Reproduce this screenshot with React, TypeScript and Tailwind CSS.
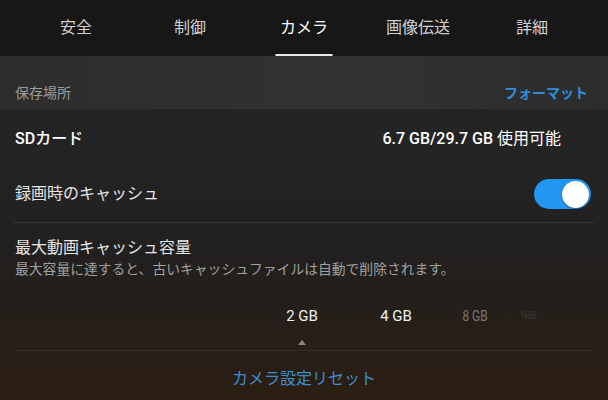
import React from "react";

const tabs = ["安全", "制御", "カメラ", "画像伝送", "詳細"];

export default function App() {
  return (
    <div
      className="w-[608px] h-[400px] overflow-hidden flex flex-col text-white"
      style={{ fontFamily: "Roboto, 'Noto Sans CJK JP', sans-serif" }}
    >
      {/* Tab bar */}
      <div className="h-[56px] bg-[#171717] flex px-[19px] shrink-0">
        {tabs.map((t) => {
          const active = t === "カメラ";
          return (
            <div key={t} className="flex-1 relative flex items-center justify-center">
              <span className={`text-[16px] ${active ? "text-white" : "text-[#d2d2d2]"}`}>{t}</span>
              {active && (
                <div className="absolute bottom-0 left-1/2 -translate-x-1/2 w-[57px] h-[2px] bg-[#e8e8e8]" />
              )}
            </div>
          );
        })}
      </div>

      <div className="flex-1 flex flex-col bg-[linear-gradient(180deg,#262626_0%,#232222_45%,#221f1d_65%,#2c1e12_100%)]">
        {/* Section header */}
        <div className="h-[53px] bg-[linear-gradient(90deg,#2e2d2d,#333232_60%,#2d2c2c)] flex items-end justify-between px-[15px] pb-[6px]">
          <span className="text-[14px] leading-[20px] text-[#9c9c9c]">保存場所</span>
          <span className="text-[14px] leading-[20px] font-bold text-[#2f8fdc] mr-[5px]">フォーマット</span>
        </div>

        {/* SD card */}
        <div className="h-[60px] flex items-center justify-between px-[15px]">
          <span className="text-[16px] font-medium">SDカード</span>
          <span className="text-[16px] mr-[32px]">
            <span className="font-medium">6.7 GB/29.7 GB</span> 使用可能
          </span>
        </div>

        {/* Cache toggle */}
        <div className="h-[53px] flex items-start justify-between px-[15px] pt-[10px]">
          <span className="text-[16px] leading-[30px] text-[#e6e6e6]">録画時のキャッシュ</span>
          <div className="w-[57px] h-[30px] rounded-full bg-[#2196f3] flex items-center justify-end pr-[2px] mr-[2px]">
            <div className="w-[27px] h-[27px] rounded-full bg-white shadow-[0_1px_2px_rgba(0,0,0,0.35)]" />
          </div>
        </div>

        <div className="mx-[14px] h-px bg-[#363535]" />

        {/* Max cache */}
        <div className="px-[15px] pt-[14px] flex flex-col">
          <span className="text-[16px] leading-[22px] text-[#e6e6e6]">最大動画キャッシュ容量</span>
          <span className="text-[13.8px] leading-[20px] text-[#a0a0a0]">
            最大容量に達すると、古いキャッシュファイルは自動で削除されます。
          </span>
        </div>

        {/* Picker */}
        <div className="flex pl-[255px] mt-[25px] h-[24px] items-center">
          <div className="w-[94px] text-center text-[15px] text-[#f0f0f0]">2 GB</div>
          <div className="w-[94px] text-center text-[15px] text-[#f0f0f0]">4 GB</div>
          <div className="w-[64px] text-center text-[14px] text-[#7a7672] scale-x-[0.85]">8 GB</div>
          <div className="w-[42px] text-center text-[11px] text-[#3f3a36] scale-x-[0.6]">16GB</div>
        </div>
        <div className="flex pl-[298px] mt-[12px]">
          <div className="w-0 h-0 border-l-[4px] border-r-[4px] border-b-[5px] border-l-transparent border-r-transparent border-b-[#8a8784]" />
        </div>

        <div className="mx-[14px] h-px bg-[#3a2f25] mt-[5px]" />

        <div className="flex justify-center pt-[17px]">
          <span className="text-[16px] leading-[22px] text-[#3a8fd4]">カメラ設定リセット</span>
        </div>
      </div>
    </div>
  );
}
